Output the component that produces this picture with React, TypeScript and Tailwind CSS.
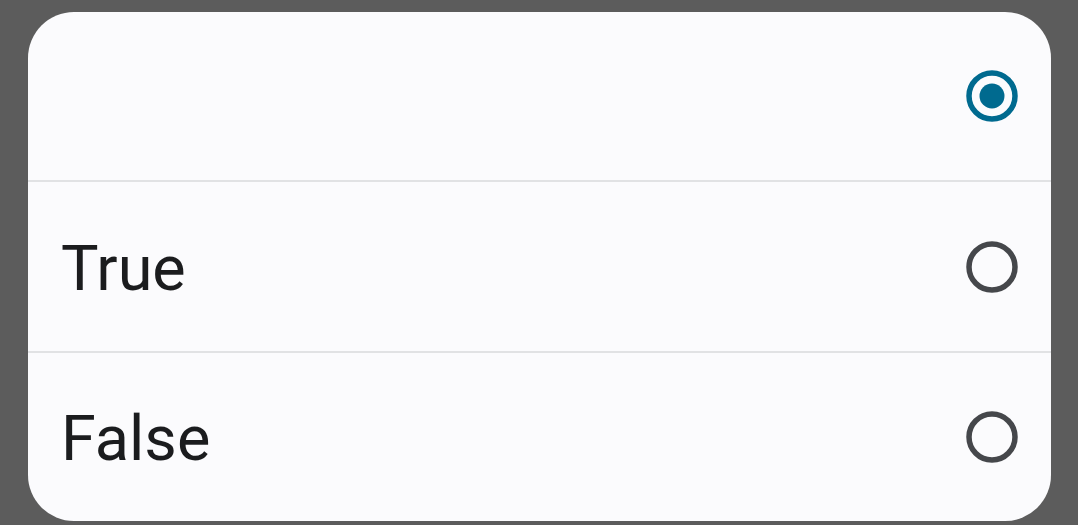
import React from "react";

function Radio({ selected }: { selected?: boolean }) {
  return (
    <svg width="52" height="52" viewBox="0 0 52 52">
      <circle
        cx="26"
        cy="26"
        r="23"
        fill="none"
        stroke={selected ? "#006a8f" : "#45474b"}
        strokeWidth="5.5"
      />
      {selected && <circle cx="26" cy="26" r="12.5" fill="#006a8f" />}
    </svg>
  );
}

function Row({ label, selected, h }: { label: string; selected?: boolean; h: string }) {
  return (
    <div className={`flex items-center justify-between pl-[33px] pr-[33px] ${h}`}>
      <span className="text-[63px] leading-none mt-[3px] text-[#1b1c1e] font-['Roboto',sans-serif]">{label}</span>
      <Radio selected={selected} />
    </div>
  );
}

export default function App() {
  return (
    <div className="w-[1078px] h-[525px] bg-[#5c5c5c] flex pl-[28px] pt-[12px] overflow-hidden">
      <div className="w-[1023px] h-[509px] bg-[#fbfbfd] rounded-[46px] flex flex-col overflow-hidden">
        <Row label="" selected h="h-[168px]" />
        <div className="h-[2px] bg-[#e1e2e4]" />
        <Row label="True" h="h-[169px]" />
        <div className="h-[2px] bg-[#e1e2e4]" />
        <Row label="False" h="h-[168px]" />
      </div>
    </div>
  );
}
